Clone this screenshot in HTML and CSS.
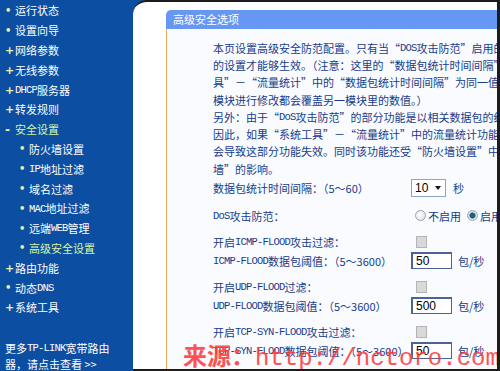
FILE: index.html
```html
<!DOCTYPE html>
<html lang="zh-CN">
<head>
<meta charset="utf-8">
<title>高级安全选项</title>
<link rel="stylesheet" href="styles.css">
</head>
<body>
<div class="page">
  <nav class="side">
    <ul class="menu">
      <li class="item"><span class="mk dot">•</span>运行状态</li>
      <li class="item"><span class="mk dot">•</span>设置向导</li>
      <li class="item"><span class="mk plus">+</span>网络参数</li>
      <li class="item"><span class="mk plus">+</span>无线参数</li>
      <li class="item"><span class="mk plus">+</span><span class="lat">DHCP</span>服务器</li>
      <li class="item"><span class="mk plus">+</span>转发规则</li>
      <li class="item active"><span class="mk minus">-</span>安全设置</li>
      <li class="item sub"><span class="mk dot">•</span>防火墙设置</li>
      <li class="item sub"><span class="mk dot">•</span><span class="lat">IP</span>地址过滤</li>
      <li class="item sub"><span class="mk dot">•</span>域名过滤</li>
      <li class="item sub"><span class="mk dot">•</span><span class="lat">MAC</span>地址过滤</li>
      <li class="item sub"><span class="mk dot">•</span>远端<span class="lat">WEB</span>管理</li>
      <li class="item sub active"><span class="mk dot">•</span>高级安全设置</li>
      <li class="item"><span class="mk plus">+</span>路由功能</li>
      <li class="item"><span class="mk dot">•</span>动态<span class="lat">DNS</span></li>
      <li class="item"><span class="mk plus">+</span>系统工具</li>
    </ul>
    <div class="more"><span class="more-ln">更多<span class="lat">TP-LINK</span>宽带路由</span><span class="more-ln">器，请点击查看 &gt;&gt;</span></div>
  </nav>
  <main class="main">
    <section class="panel">
      <div class="panel-head">高级安全选项</div>
      <div class="panel-body">
        <div class="intro">
          <span class="ln">本页设置高级安全防范配置。只有当“<span class="lat">DOS</span>攻击防范”启用的时候，以下</span>
          <span class="ln">的设置才能够生效。（注意：这里的“数据包统计时间间隔”与“系统工</span>
          <span class="ln">具”－“流量统计”中的“数据包统计时间间隔”为同一值，在任一</span>
          <span class="ln">模块进行修改都会覆盖另一模块里的数值。）</span>
          <span class="ln">另外：由于“<span class="lat">DoS</span>攻击防范”的部分功能是以相关数据包的统计为依据的，</span>
          <span class="ln">因此，如果“系统工具”－“流量统计”中的流量统计功能被关闭，则</span>
          <span class="ln">会导致这部分功能失效。同时该功能还受“防火墙设置”中的“开启防火</span>
          <span class="ln">墙”的影响。</span>
        </div>
        <div class="form">
          <div class="row">
            <span class="lbl">数据包统计时间间隔：（5～60）</span>
            <span class="ctl"><span class="select"><span class="sel-val">10</span><span class="sel-arrow"></span></span><span class="unit">秒</span></span>
          </div>
          <div class="row gap">
            <span class="lbl"><span class="lat">DoS</span>攻击防范：</span>
            <span class="ctl"><span class="radio"></span><span class="rlabel">不启用</span><span class="radio on"></span><span class="rlabel">启用</span></span>
          </div>
          <div class="row gap">
            <span class="lbl">开启<span class="lat">ICMP-FLOOD</span>攻击过滤：</span>
            <span class="ctl"><span class="check"></span></span>
          </div>
          <div class="row">
            <span class="lbl"><span class="lat">ICMP-FLOOD</span>数据包阈值：（5～3600）</span>
            <span class="ctl"><span class="field">50</span><span class="unit">包/秒</span></span>
          </div>
          <div class="row gap">
            <span class="lbl">开启<span class="lat">UDP-FLOOD</span>过滤：</span>
            <span class="ctl"><span class="check"></span></span>
          </div>
          <div class="row">
            <span class="lbl"><span class="lat">UDP-FLOOD</span>数据包阈值：（5～3600）</span>
            <span class="ctl"><span class="field">500</span><span class="unit">包/秒</span></span>
          </div>
          <div class="row gap">
            <span class="lbl">开启<span class="lat">TCP-SYN-FLOOD</span>攻击过滤：</span>
            <span class="ctl"><span class="check"></span></span>
          </div>
          <div class="row">
            <span class="lbl"><span class="lat">TCP-SYN-FLOOD</span>数据包阈值：（5～3600）</span>
            <span class="ctl"><span class="field">50</span><span class="unit">包/秒</span></span>
          </div>
        </div>
      </div>
    </section>
    <div class="watermark">来源：<span class="wm-lat">http://nctoro.com</span></div>
  </main>
</div>
</body>
</html>
```

FILE: styles.css
```css
* { box-sizing: border-box; }

html, body {
  margin: 0;
  padding: 0;
}

body {
  width: 500px;
  height: 371px;
  overflow: hidden;
  font-family: "Noto Sans CJK SC", sans-serif;
  font-size: 11px;
}

.page {
  display: flex;
  width: 500px;
  height: 371px;
  background: #0b4ea2;
}

.lat {
  font-family: "Liberation Mono", monospace;
  font-size: 10.5px;
  letter-spacing: -0.8px;
}

/* sidebar */
.side {
  flex: none;
  width: 133px;
  display: flex;
  flex-direction: column;
  justify-content: space-between;
  color: #ffffff;
  padding-top: 1px;
}

.menu {
  list-style: none;
  margin: 0;
  padding: 0;
}

.item {
  display: flex;
  align-items: center;
  height: 19.8px;
  padding-left: 5px;
  white-space: nowrap;
  line-height: 1;
}

.item.sub { padding-left: 19px; }

.item.active { color: #d8f5a8; }

.mk {
  flex: none;
  width: 10px;
  color: #eef2a8;
  font-family: "DejaVu Sans", sans-serif;
  font-weight: bold;
}

.mk.dot { font-size: 10px; }
.mk.plus { font-size: 11px; }
.mk.minus { font-size: 12px; }

.more {
  display: flex;
  flex-direction: column;
  padding-left: 5px;
  margin-bottom: -1px;
  white-space: nowrap;
}

.more-ln {
  display: flex;
  align-items: center;
  height: 16px;
}

/* main area */
.main {
  flex: 1;
  position: relative;
  overflow: hidden;
  background: #ffffff;
  border-top: 2px solid #1c1c1c;
  border-right: 3px solid #1c1c1c;
  border-bottom: 2px solid #1c1c1c;
  border-top-left-radius: 14px;
  padding: 8px 0 0 33px;
}

.panel {
  height: 100%;
  display: flex;
  flex-direction: column;
}

.panel-head {
  flex: none;
  height: 19px;
  line-height: 19px;
  padding-left: 7px;
  background: #6797f4;
  color: #ffffff;
  border-top-left-radius: 5px;
  white-space: nowrap;
}

.panel-body {
  flex: 1;
  border-left: 1px solid #f2a55c;
  background: #fafbff;
  padding: 10px 0 0 46px;
  color: #163b8a;
  overflow: hidden;
}

.intro {
  display: flex;
  flex-direction: column;
}

.ln {
  display: flex;
  align-items: center;
  height: 17.3px;
  white-space: nowrap;
}

.form {
  margin-top: 1px;
}

.row {
  display: flex;
  align-items: center;
  height: 19px;
  white-space: nowrap;
}

.row.gap { margin-top: 7px; }
.row.gap:nth-child(2) { margin-top: 9px; }

.lbl {
  flex: none;
  display: flex;
  align-items: center;
  width: 198px;
}

.ctl {
  display: flex;
  align-items: center;
}

.select {
  display: flex;
  align-items: center;
  justify-content: space-between;
  width: 35px;
  height: 18px;
  padding: 0 4px 0 3px;
  background: #ffffff;
  border: 1px solid #8ea4c8;
  color: #000000;
  font-family: "Liberation Sans", sans-serif;
  font-size: 12px;
}

.sel-arrow {
  width: 0;
  height: 0;
  border-left: 3.5px solid transparent;
  border-right: 3.5px solid transparent;
  border-top: 4px solid #111111;
}

.unit { margin-left: 7px; }

.radio {
  flex: none;
  width: 11px;
  height: 11px;
  margin-left: 4px;
  border-radius: 50%;
  border: 1px solid #9aa3ad;
  background: radial-gradient(circle at 40% 40%, #ffffff 0%, #e4e6ea 70%, #cfd3d8 100%);
}

.radio.on {
  margin-left: 6px;
  background: radial-gradient(circle, #1e5f7a 0 2.4px, #6d9fb4 3px, #e6e8ec 3.5px, #d0d4d9 100%);
}

.rlabel { margin-left: 2px; }

.check {
  width: 11px;
  height: 12px;
  margin-left: 5px;
  background: #d9d9d9;
  border: 1px solid #b4b4b4;
}

.field {
  display: flex;
  align-items: center;
  width: 41px;
  height: 17px;
  padding-left: 3px;
  background: #ffffff;
  border: 1px solid #4d6394;
  border-top-width: 2px;
  border-left-width: 2px;
  color: #000000;
  font-family: "Liberation Sans", sans-serif;
  font-size: 12px;
}

.field + .unit { margin-left: 6px; }

.watermark {
  position: absolute;
  left: 50px;
  top: 339px;
  font-size: 24px;
  line-height: 28px;
  font-weight: bold;
  color: #ff3a3a;
  opacity: 0.88;
  white-space: nowrap;
}

.wm-lat {
  font-family: "Liberation Mono", monospace;
  font-size: 24px;
  font-weight: normal;
}
```
